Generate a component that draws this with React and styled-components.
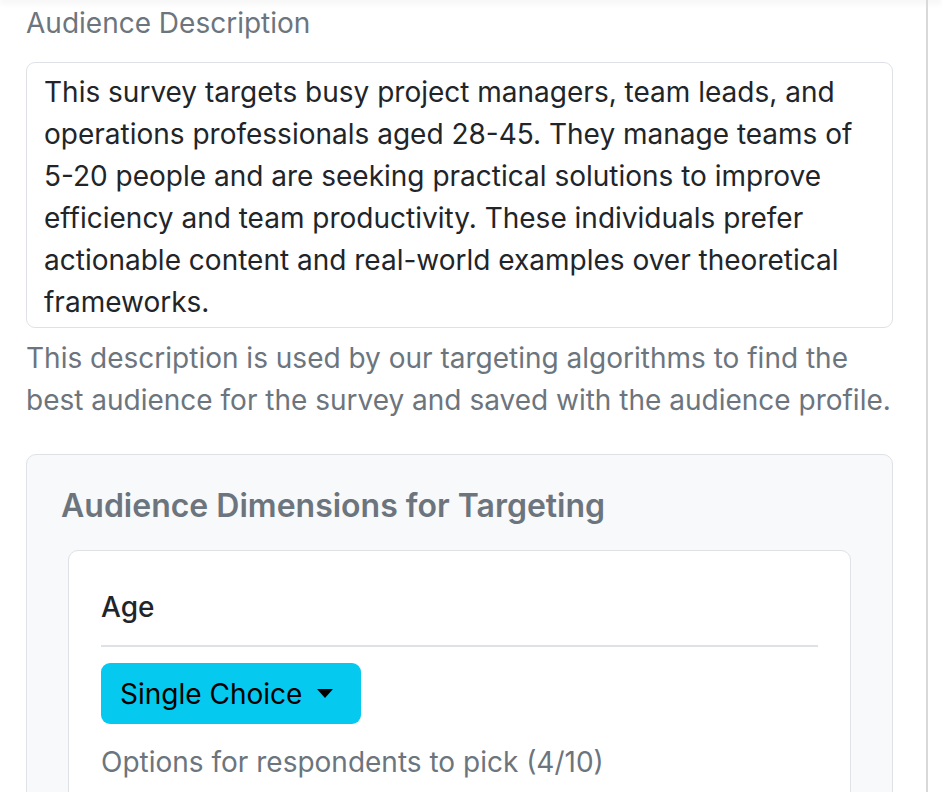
import styled, { createGlobalStyle } from "styled-components";

const GlobalStyle = createGlobalStyle`
  html, body {
    margin: 0;
    padding: 0;
    background: #fff;
  }
  body {
    font-family: Inter, "Noto Sans", "Liberation Sans", sans-serif;
    color: #212529;
  }
`;

const audienceText =
  "This survey targets busy project managers, team leads, and operations professionals aged 28-45. They manage teams of 5-20 people and are seeking practical solutions to improve efficiency and team productivity. These individuals prefer actionable content and real-world examples over theoretical frameworks.";

const App = () => {
  return (
    <Page>
      <GlobalStyle />
      <TopShade />
      <Column>
        <Label htmlFor="audience-desc">Audience Description</Label>
        <TextArea id="audience-desc" defaultValue={audienceText} />
        <HelpText>
          This description is used by our targeting algorithms to find the
          best audience for the survey and saved with the audience profile.
        </HelpText>

        <DimensionsCard>
          <CardTitle>Audience Dimensions for Targeting</CardTitle>
          <DimensionCard>
            <DimensionName>Age</DimensionName>
            <Divider />
            <TypeButton type="button">
              Single Choice
              <Caret />
            </TypeButton>
            <OptionsHint>Options for respondents to pick (4/10)</OptionsHint>
          </DimensionCard>
        </DimensionsCard>
      </Column>
    </Page>
  );
};

const Page = styled.div`
  position: relative;
  height: 792px;
  overflow: hidden;
`;

const TopShade = styled.div`
  height: 0;
  box-shadow: 0 1px 6px 1px rgba(0, 0, 0, 0.12);
`;

const Column = styled.div`
  width: 928px;
  min-height: 792px;
  box-sizing: border-box;
  border-right: 2px solid #d9d9d9;
  padding: 5px 33px 0 26px;
`;

const Label = styled.label`
  display: block;
  font-size: 28px;
  line-height: 37px;
  color: #6c757d;
  margin-bottom: 20px;
`;

const TextArea = styled.textarea`
  display: block;
  width: 100%;
  height: 266px;
  box-sizing: border-box;
  padding: 8px 17px 4px;
  border: 1px solid #dee2e6;
  border-radius: 9px;
  font-family: inherit;
  font-size: 28px;
  line-height: 42px;
  color: #212529;
  resize: none;
  overflow: hidden;
  outline: none;
`;

const HelpText = styled.div`
  margin-top: 9px;
  font-size: 28px;
  line-height: 42px;
  color: #6c757d;
`;

const DimensionsCard = styled.div`
  margin-top: 33px;
  background: #f8f9fa;
  border: 1px solid #dee2e6;
  border-radius: 10px;
  padding: 32px 41px 40px;
`;

const CardTitle = styled.h3`
  margin: 0 0 26px -7px;
  font-size: 32px;
  line-height: 37px;
  font-weight: 600;
  color: #6c757d;
`;

const DimensionCard = styled.div`
  background: #fff;
  border: 1px solid #dee2e6;
  border-radius: 10px;
  padding: 35px 32px 30px;
`;

const DimensionName = styled.div`
  font-size: 28px;
  line-height: 42px;
  font-weight: 500;
  color: #212529;
`;

const Divider = styled.hr`
  margin: 17px 0 16px;
  border: 0;
  border-top: 2px solid #dee2e6;
`;

const TypeButton = styled.button`
  display: inline-flex;
  align-items: center;
  gap: 15px;
  height: 61px;
  padding: 0 28px 0 19px;
  border: 0;
  border-radius: 9px;
  background: #06c9ef;
  color: #000;
  font-family: inherit;
  font-size: 28px;
  cursor: pointer;
`;

const Caret = styled.span`
  width: 0;
  height: 0;
  border-left: 8px solid transparent;
  border-right: 8px solid transparent;
  border-top: 9px solid #000;
`;

const OptionsHint = styled.div`
  margin-top: 17px;
  font-size: 28px;
  line-height: 42px;
  color: #6c757d;
`;

export default App;
